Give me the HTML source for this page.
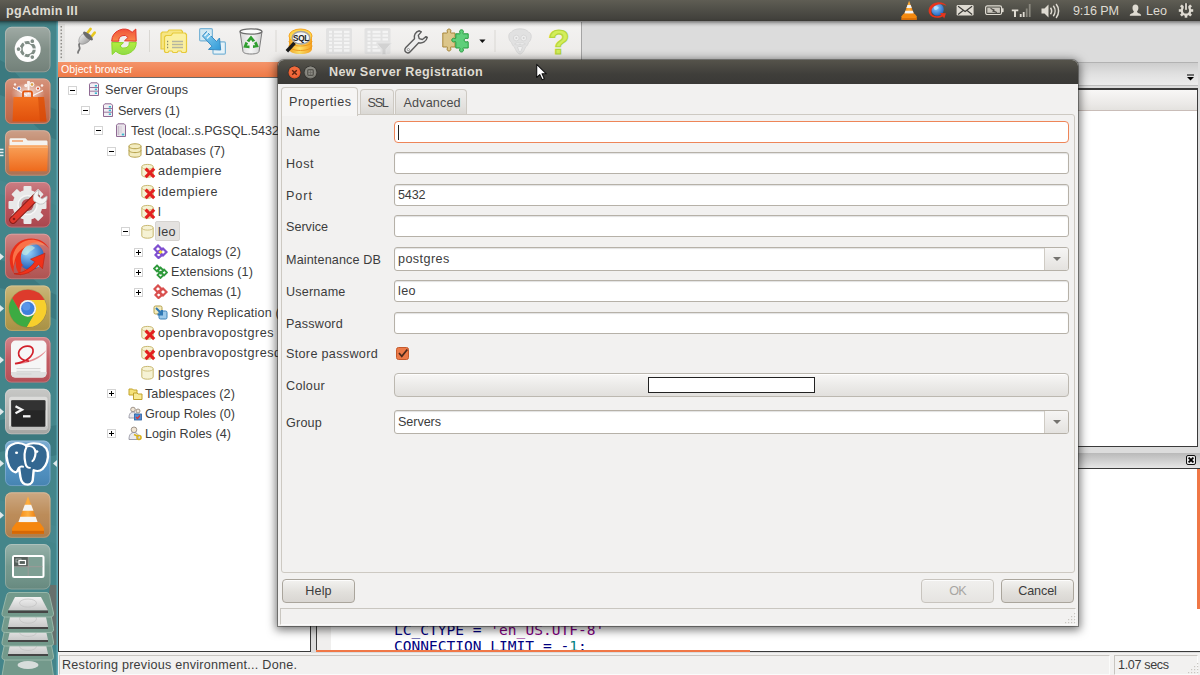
<!DOCTYPE html>
<html lang="en">
<head>
<meta charset="utf-8">
<title>pgAdmin III</title>
<style>
*{box-sizing:border-box;margin:0;padding:0}
html,body{width:1200px;height:675px;overflow:hidden;background:#f2f1f0}
body{position:relative;font-family:"Liberation Sans",sans-serif;font-size:12.6px;color:#3c3c3c}
.a{position:absolute}
.t{position:absolute;white-space:nowrap;line-height:16px}
/* top panel */
#panel{left:0;top:0;width:1200px;height:21px;background:linear-gradient(#5f5d54 0,#504f48 45%,#42413c 90%,#3a3935 100%)}
#panel .t{color:#dfdbd2;top:2.5px}
/* launcher */
#launcher{left:0;top:22px;width:58px;height:653px;background:#3f7b83;overflow:hidden}
.tile{position:absolute;left:5px;width:46px;height:46px;border-radius:7px;box-shadow:inset 0 0 0 1px rgba(255,255,255,.18),0 0 0 1px rgba(0,0,0,.12)}
/* main window */
#toolbar{left:58px;top:21px;width:523px;height:41px;background:linear-gradient(#f4f3f2,#eceae8)}
#tbgray{left:581px;top:22px;width:619px;border-left:1.5px solid #a4a4a4;height:40px;background:#dcdcdc}
.sep{position:absolute;top:29px;width:1px;height:24px;background:#d6d4d0}
#obhead{left:58px;top:62px;width:253px;height:15px;background:linear-gradient(#f4946a,#ef7a47)}
#tree{left:58px;top:77px;width:253px;height:575px;background:#fff;border:1px solid #3a3a3a;border-top-color:#6a6a6a}
.row{position:absolute;white-space:nowrap;line-height:20px;height:20px;color:#3c3c3c}
.exp{position:absolute;width:9px;height:9px;border:1px solid #d4d4d4;background:#fff}
.exp:before{content:"";position:absolute;left:1px;top:3px;width:5px;height:1px;background:#000}
.exp.p:after{content:"";position:absolute;left:3px;top:1px;width:1px;height:5px;background:#000}
/* dialog */
#dlg{left:278px;top:60px;width:800px;height:566px;background:#f2f1f0;border-radius:6px 6px 0 0;box-shadow:0 2px 10px 2px rgba(0,0,0,.55),0 0 0 1px rgba(60,59,55,.45)}
#dtitle{left:0;top:0;width:800px;height:24px;border-radius:6px 6px 0 0;background:linear-gradient(#55534b,#3f3e3a 60%,#3a3936)}
.inp{position:absolute;left:116px;width:675px;height:22px;background:#fff;border:1px solid #b6b1a8;border-radius:3px;box-shadow:inset 0 1px 1px rgba(0,0,0,.12);padding:0 3px;line-height:20px;color:#3c3c3c}
.lbl{position:absolute;left:8px;white-space:nowrap;line-height:16px;color:#3c3c3c}
.btn{position:absolute;height:24px;border:1px solid #aaa59c;border-radius:4px;background:linear-gradient(#f3f2f0,#e2e0dc 55%,#d9d6d2);text-align:center;line-height:22px;color:#3c3c3c;box-shadow:inset 0 1px 0 rgba(255,255,255,.8)}

/* right pane */
#rtabs{left:311px;top:62px;width:887px;height:24px;border-top:1px solid #b2b2b2;border-bottom:1px solid #bdbdbd;background:linear-gradient(#cdcdcd,#e0e0e0 50%,#ececec)}
#rgap{left:311px;top:86px;width:889px;height:2px;background:#dcdcdc}
#rlist{left:316px;top:88px;width:882px;height:359px;background:#fff;border:1px solid #3a3a3a;border-top:2px solid #3a3a3a}
#rlhead{left:0;top:0;width:880px;height:21px;background:linear-gradient(#f8f7f6,#ebe9e7 70%,#e4e2df);border-bottom:1px solid #c9bdb8}
#sqlhead{left:316px;top:453px;width:884px;height:15px;background:linear-gradient(#b9b9b9,#cfcfcf 50%,#e6e6e6)}
#sql{left:316px;top:468px;width:884px;height:184px;background:#fff;border:1px solid #3a3a3a;border-right:0;overflow:hidden}
#sqlm{left:0;top:0;width:14px;height:184px;background:#f0efee}
.code{position:absolute;white-space:pre;font-family:"DejaVu Sans Mono","Liberation Mono",monospace;font-size:14.55px;line-height:17px;color:#00007f}
#status{left:58px;top:653px;width:1142px;height:22px;background:#f2f1f0}
.sf{position:absolute;top:2px;height:20px;border:1px solid #c8c5c0;border-bottom-color:#fbfbfa;border-right-color:#fbfbfa;}

.tab{position:absolute;top:29px;height:26px;height:25px;border:1px solid #cdc9c2;border-bottom:0;border-radius:4px 4px 0 0;background:linear-gradient(#efeeec,#e3e1de 70%,#dad8d4);color:#4a4a4a}
.tab.on{top:27px;height:29px;background:#f6f5f4;color:#3c3c3c;z-index:2}
#nb{left:3px;top:54px;width:794px;height:459px;border:1px solid #cdc9c2;border-radius:0 3px 3px 3px;background:#f2f1f0}
.combo{position:absolute;left:116px;width:675px;height:24px;background:#fff;border:1px solid #b6b1a8;border-radius:3px;box-shadow:inset 0 1px 1px rgba(0,0,0,.12);padding:0 3px;line-height:22px;color:#3c3c3c}
.combo i{position:absolute;right:0;top:0;width:24px;height:22px;border-left:1px solid #cfcbc4;border-radius:0 2px 2px 0;background:linear-gradient(#f6f5f4,#e4e2df)}
.combo i:after{content:"";position:absolute;left:7.5px;top:9px;border:4px solid transparent;border-top:4.5px solid #75736f;border-bottom:0}
</style>
</head>
<body>
<!-- ===== top panel ===== -->
<div id="panel" class="a">
  <span class="t" style="left:6px;font-weight:bold"><span style="letter-spacing:0.31px">pgAdmin III</span></span>
  <!--PI-->
<svg class="a" style="left:890px;top:0" width="310" height="22" viewBox="890 0 310 22">
<defs>
<linearGradient id="gCone" x1="0" y1="0" x2="1" y2="0"><stop offset="0" stop-color="#f28a12"/><stop offset=".5" stop-color="#ffae3a"/><stop offset="1" stop-color="#e87208"/></linearGradient>
<radialGradient id="gGlobe" cx=".4" cy=".35" r=".7"><stop offset="0" stop-color="#8fd0ff"/><stop offset="1" stop-color="#1f5fc0"/></radialGradient>
</defs>
<!-- vlc cone -->
<g transform="translate(900.500 .7)">
<path d="M8.600 0L3.200 14.500h10.800z" fill="url(#gCone)"/>
<path d="M7 4.300h3.200l1.100 3H5.900zM4.900 10h7.400l1 2.800H3.900z" fill="#f2f2f2"/>
<path d="M1 15.500l2-2.500h11.200l2 2.500v3.600H1z" fill="#f58a10"/>
<path d="M1 17.500h15.200v1.600H1z" fill="#d96c06"/>
</g>
<!-- swiftfox -->
<g transform="translate(928 2)">
<circle cx="9.500" cy="7.500" r="6.300" fill="url(#gGlobe)"/>
<path d="M6 4.500c2-1 4 0 5 1.500-1 .5-2 2-3.500 2S5.500 6 6 4.500z" fill="#bfe6ff" opacity=".8"/>
<path d="M1 11C-.5 6 3 1.500 9 .5c4-.6 8 .8 9.500 3.500-3-2-7-2.200-10.500-.7C4.500 5 2.500 8 3.500 11.500c1.500 3 6 3.600 10 1.500l-1.500-2 6 .2-1.800 5.300-1.300-2C10 17 3 16 1 11z" fill="#e8341c"/>
</g>
<!-- mail -->
<g transform="translate(956.600 5)">
<rect x="0" y="0" width="17" height="10.600" rx="1.300" fill="#dfdbd2"/>
<path d="M1.500 1.300l7 5.200 7-5.200M1.500 9.500l5-4M15.500 9.500l-5-4" fill="none" stroke="#3c3b37" stroke-width="1.100"/>
</g>
<!-- battery -->
<g transform="translate(985 5.300)">
<rect x=".6" y=".6" width="16" height="8.600" rx="1.800" fill="none" stroke="#dfdbd2" stroke-width="1.200"/>
<rect x="17" y="3" width="1.600" height="3.800" fill="#dfdbd2"/>
<rect x="2.300" y="2.300" width="12.600" height="5.200" fill="#c9c5bc"/>
<path d="M5.500 3l4 1.700-1 .8 3.500 1.700-4.500-1.300 1-.9z" fill="#3c3b37" stroke="#3c3b37" stroke-width=".6"/>
</g>
<!-- network -->
<g transform="translate(1011.800 0)">
<path d="M0 9.500h6.500v1.800h-2.300v5.700h-2v-5.700H0z" fill="#dfdbd2"/>
<rect x="8" y="14" width="1.800" height="3" fill="#dfdbd2"/>
<rect x="11" y="12" width="1.800" height="5" fill="#dfdbd2"/>
<rect x="14" y="8.500" width="1.800" height="8.500" fill="#8a887f"/>
<rect x="17" y="4" width="1.800" height="13" fill="#8a887f"/>
</g>
<!-- volume -->
<g transform="translate(1041.500 3.500)">
<path d="M0 5h3l4-4v13l-4-4H0z" fill="#dfdbd2"/>
<path d="M9 4.300c1.300 1.800 1.300 4.600 0 6.400M11.800 2.300c2.300 3 2.300 7.400 0 10.400M14.600.5c3.300 4 3.300 10 0 14" fill="none" stroke="#dfdbd2" stroke-width="1.500"/>
</g>
<!-- user -->
<g transform="translate(1129.800 4.400)">
<path d="M5.600 0c2 0 3 1.500 3 3.500 0 1.500-.6 2.800-1.400 3.500.3 1.200 1 1.600 2.500 2.200 1.300.5 1.600 1.200 1.600 2.200H0c0-1 .3-1.700 1.600-2.200 1.500-.6 2.200-1 2.500-2.200-.8-.7-1.400-2-1.400-3.500 0-2 1-3.500 2.900-3.500z" fill="#dfdbd2"/>
</g>
<!-- power gear -->
<g transform="translate(1186 10.500)">
<g fill="#dfdbd2"><rect x="-1.300" y="-7.200" width="2.600" height="3" transform="rotate(45)"/><rect x="-1.300" y="-7.200" width="2.600" height="3" transform="rotate(90)"/><rect x="-1.300" y="-7.200" width="2.600" height="3" transform="rotate(135)"/><rect x="-1.300" y="-7.200" width="2.600" height="3" transform="rotate(180)"/><rect x="-1.300" y="-7.200" width="2.600" height="3" transform="rotate(225)"/><rect x="-1.300" y="-7.200" width="2.600" height="3" transform="rotate(270)"/><rect x="-1.300" y="-7.200" width="2.600" height="3" transform="rotate(315)"/></g>
<circle r="4.200" fill="none" stroke="#dfdbd2" stroke-width="2.200"/>
<rect x="-2.300" y="-7.500" width="4.600" height="5.500" fill="#45443f"/>
<rect x="-.9" y="-7.300" width="1.800" height="6.600" fill="#dfdbd2"/>
</g>
</svg>

<!--/PI-->
  <span class="t" style="left:1073px"><span style="letter-spacing:-0.17px">9:16 PM</span></span>
  <span class="t" style="left:1146px"><span style="letter-spacing:-0.01px">Leo</span></span>
</div>
<!-- ===== launcher ===== -->
<div id="launcher" class="a" style="top:0;height:675px;background:none"><!--LA-->
<svg class="a" style="left:0;top:21px" width="58" height="654" viewBox="0 21 58 654">
<defs>
<linearGradient id="lgT" x1="0" y1="0" x2="0" y2="1"><stop offset="0" stop-color="#fff" stop-opacity=".28"/><stop offset=".5" stop-color="#fff" stop-opacity=".04"/><stop offset="1" stop-color="#000" stop-opacity=".08"/></linearGradient>
<linearGradient id="lgBag" x1="0" y1="0" x2="0" y2="1"><stop offset="0" stop-color="#f2701f"/><stop offset="1" stop-color="#e0500c"/></linearGradient>
<linearGradient id="lgFol" x1="0" y1="0" x2="0" y2="1"><stop offset="0" stop-color="#f9a25a"/><stop offset="1" stop-color="#ee6a1c"/></linearGradient>
<radialGradient id="lgGlobe" cx=".4" cy=".35" r=".7"><stop offset="0" stop-color="#9ad8ff"/><stop offset="1" stop-color="#1a52b0"/></radialGradient>
<linearGradient id="lgCone" x1="0" y1="0" x2="1" y2="0"><stop offset="0" stop-color="#f08210"/><stop offset=".5" stop-color="#ffb040"/><stop offset="1" stop-color="#e46e06"/></linearGradient>
<linearGradient id="lgHd" x1="0" y1="0" x2="0" y2="1"><stop offset="0" stop-color="#f2f2f2"/><stop offset="1" stop-color="#c9c9c9"/></linearGradient>
<radialGradient id="lgGlow" cx=".5" cy=".5" r=".5"><stop offset="0" stop-color="#fff" stop-opacity=".85"/><stop offset="1" stop-color="#fff" stop-opacity="0"/></radialGradient>
</defs>
<rect x="0" y="21" width="58" height="654" fill="#44858a"/>
<path d="M0 60c20 10 30 40 57 50v30C30 130 20 100 0 95zM0 260c25 5 40 30 57 35v25C35 310 15 290 0 288zM0 420c20-5 40 10 57 5v30c-20 5-40-8-57-3z" fill="#37737b" opacity=".7"/>
<path d="M0 180c18 8 38 2 57 12v14C38 196 18 202 0 194zM0 500c22 6 36 22 57 26v18c-21-4-35-20-57-26z" fill="#4a8a90" opacity=".5"/>
<path d="M50 585h7v60h-7c-3-20-3-40 0-60z" fill="#9a5040" opacity=".4"/>
<rect x="56.500" y="21" width="1.500" height="654" fill="#5fa9b6"/>
<rect x="5" y="26.8" width="45.500" height="45.500" rx="6.500" fill="#7b8a82"/><rect x="5" y="26.8" width="45.500" height="45.500" rx="6.500" fill="url(#lgT)"/><rect x="5.500" y="27.3" width="44.500" height="44.500" rx="6" fill="none" stroke="#fff" stroke-opacity=".22"/>
<rect x="5" y="78.5" width="45.500" height="45.500" rx="6.500" fill="#c66c4c"/><rect x="5" y="78.5" width="45.500" height="45.500" rx="6.500" fill="url(#lgT)"/><rect x="5.500" y="79.0" width="44.500" height="44.500" rx="6" fill="none" stroke="#fff" stroke-opacity=".22"/>
<rect x="5" y="130.2" width="45.500" height="45.500" rx="6.500" fill="#b97a5a"/><rect x="5" y="130.2" width="45.500" height="45.500" rx="6.500" fill="url(#lgT)"/><rect x="5.500" y="130.7" width="44.500" height="44.500" rx="6" fill="none" stroke="#fff" stroke-opacity=".22"/>
<rect x="5" y="182.0" width="45.500" height="45.500" rx="6.500" fill="#b64c54"/><rect x="5" y="182.0" width="45.500" height="45.500" rx="6.500" fill="url(#lgT)"/><rect x="5.500" y="182.5" width="44.500" height="44.500" rx="6" fill="none" stroke="#fff" stroke-opacity=".22"/>
<rect x="5" y="233.7" width="45.500" height="45.500" rx="6.500" fill="#bb5a58"/><rect x="5" y="233.7" width="45.500" height="45.500" rx="6.500" fill="url(#lgT)"/><rect x="5.500" y="234.2" width="44.500" height="44.500" rx="6" fill="none" stroke="#fff" stroke-opacity=".22"/>
<rect x="5" y="285.4" width="45.500" height="45.500" rx="6.500" fill="#b59c4a"/><rect x="5" y="285.4" width="45.500" height="45.500" rx="6.500" fill="url(#lgT)"/><rect x="5.500" y="285.9" width="44.500" height="44.500" rx="6" fill="none" stroke="#fff" stroke-opacity=".22"/>
<rect x="5" y="337.1" width="45.500" height="45.500" rx="6.500" fill="#c0545c"/><rect x="5" y="337.1" width="45.500" height="45.500" rx="6.500" fill="url(#lgT)"/><rect x="5.500" y="337.6" width="44.500" height="44.500" rx="6" fill="none" stroke="#fff" stroke-opacity=".22"/>
<rect x="5" y="388.8" width="45.500" height="45.500" rx="6.500" fill="#b2b3b0"/><rect x="5" y="388.8" width="45.500" height="45.500" rx="6.500" fill="url(#lgT)"/><rect x="5.500" y="389.3" width="44.500" height="44.500" rx="6" fill="none" stroke="#fff" stroke-opacity=".22"/>
<rect x="5" y="440.6" width="45.500" height="45.500" rx="6.500" fill="#4b8ec0"/><rect x="5" y="440.6" width="45.500" height="45.500" rx="6.500" fill="url(#lgT)"/><rect x="5.500" y="441.1" width="44.500" height="44.500" rx="6" fill="none" stroke="#fff" stroke-opacity=".22"/>
<rect x="5" y="492.3" width="45.500" height="45.500" rx="6.500" fill="#b98752"/><rect x="5" y="492.3" width="45.500" height="45.500" rx="6.500" fill="url(#lgT)"/><rect x="5.500" y="492.8" width="44.500" height="44.500" rx="6" fill="none" stroke="#fff" stroke-opacity=".22"/>
<rect x="5" y="544.0" width="45.500" height="45.500" rx="6.500" fill="#6f9489"/><rect x="5" y="544.0" width="45.500" height="45.500" rx="6.500" fill="url(#lgT)"/><rect x="5.500" y="544.5" width="44.500" height="44.500" rx="6" fill="none" stroke="#fff" stroke-opacity=".22"/>
<g transform="translate(27.700 49.1)"><circle r="13" fill="#fdfdfd"/><circle r="6.600" fill="none" stroke="#7f8c85" stroke-width="3.100"/><g stroke="#fdfdfd" stroke-width="1.300"><path d="M3 0h7" transform="rotate(0)"/><path d="M3 0h7" transform="rotate(120)"/><path d="M3 0h7" transform="rotate(240)"/></g><g fill="#7f8c85" stroke="#fdfdfd" stroke-width="1.100"><circle cx="-9.200" cy="0" r="2.400"/><circle cx="4.600" cy="-7.970" r="2.400"/><circle cx="4.600" cy="7.970" r="2.400"/></g></g>
<g transform="translate(5 78.5)"><ellipse cx="23" cy="15" rx="17" ry="11" fill="url(#lgGlow)"/><g fill="#fff" opacity=".85"><circle cx="14" cy="10" r="2.200"/><circle cx="21" cy="7" r="1.800"/><circle cx="27" cy="6" r="2.400"/><circle cx="33" cy="10" r="2.200"/><circle cx="37" cy="7" r="1.300"/><circle cx="10" cy="6" r="1.200"/><path d="M22.500 3l1 12 1-12zM8 9l14 8zM38 12l-12 6z" stroke="#fff" stroke-width="1"/></g><circle cx="14" cy="10" r="1.200" fill="#3a6ad0"/><circle cx="27" cy="6" r="1.300" fill="#d8a040"/><circle cx="33" cy="10" r="1.100" fill="#e05030"/><path d="M18 19v-4.500c0-1 .6-1.600 1.600-1.600h5.800c1 0 1.600.6 1.600 1.600V19" fill="none" stroke="#e2560f" stroke-width="1.800"/><path d="M8.500 18.500h30.500l2.500 24.500H7.500z" fill="url(#lgBag)"/><path d="M33 18.500h6l2.500 24.500H35z" fill="#d2480a" opacity=".6"/></g>
<g transform="translate(5 130.2)"><path d="M4.500 9.500c0-1 .5-1.500 1.500-1.500h14.500l2.200 2.200H41c1 0 1.500.5 1.500 1.500v6h-38z" fill="#f4f2ee"/><path d="M7 10.800h11" stroke="#f08a48" stroke-width="1.200"/><path d="M3.500 16.500c0-1 .5-1.500 1.500-1.500h36.500c1 0 1.500.5 1.500 1.500l-.8 23c0 1-.5 1.500-1.500 1.500H5.800c-1 0-1.500-.5-1.500-1.500z" fill="url(#lgFol)"/><path d="M4 17h38.500" stroke="#fbc08a" stroke-width="1"/></g>
<g fill="#e8ecec"><rect x="0" y="148.7" width="3.500" height="1.500"/><rect x="0" y="151.7" width="3.500" height="1.500"/><rect x="0" y="154.7" width="3.500" height="1.500"/></g>
<g transform="translate(27.500 205.0)"><g fill="#e9e9e9"><rect x="-4" y="-19" width="8" height="9" rx="1" transform="rotate(0)"/><rect x="-4" y="-19" width="8" height="9" rx="1" transform="rotate(45)"/><rect x="-4" y="-19" width="8" height="9" rx="1" transform="rotate(90)"/><rect x="-4" y="-19" width="8" height="9" rx="1" transform="rotate(135)"/><rect x="-4" y="-19" width="8" height="9" rx="1" transform="rotate(180)"/><rect x="-4" y="-19" width="8" height="9" rx="1" transform="rotate(225)"/><rect x="-4" y="-19" width="8" height="9" rx="1" transform="rotate(270)"/><rect x="-4" y="-19" width="8" height="9" rx="1" transform="rotate(315)"/><circle r="15"/></g><circle r="9.500" fill="#cfcfcf"/><circle r="6" fill="#b54a52"/><circle r="9.500" fill="none" stroke="#f6f6f6" stroke-width="1.500"/></g>
<g transform="translate(5 182.0)"><path d="M8 38L31 15" stroke="#8a1c16" stroke-width="7.500" stroke-linecap="round"/><path d="M8 38L30 16" stroke="#e0382c" stroke-width="5.500" stroke-linecap="round"/><path d="M29 19c-2-4 0-9 5-11l-1 6 4 3 5-3c1 5-3 9-8 8z" fill="#f4f4f4" stroke="#bdbdbd" stroke-width=".8"/><circle cx="9" cy="37" r="1.300" fill="#8a1c16"/></g>
<g transform="translate(5 233.7)"><circle cx="25.500" cy="22.500" r="13.500" fill="url(#lgGlobe)"/><path d="M18 13c4-3 9-2 12 1-1 2-5 3-7 6s-6 1-7-2 0-4 2-5zM30 27c3-1 6 0 7 2-1 3-4 5-7 5-1-2-1-5 0-7z" fill="#cdeedd" opacity=".6"/><path d="M44 15C40 5 24 1 13 9 4 16 2 29 9 40c-1-5 0-9 2-13-1 6 1 11 5 15-1-5 0-9 2-12 0 5 3 9 8 11-7-4-11-11-10-19 1-9 10-15 20-13 3 .7 6 3 8 6z" fill="#ea2f18"/><path d="M40 12C36 6 24 3 15 10 8 16 6 25 9 33c0-8 3-15 10-19 7-4 15-4 21-2z" fill="#ff8a5a" opacity=".75"/><path d="M9 40c8 0 16-5 21-12l-4.500-2.500 14.500-6-2.500 15.500-4-4C28 38 18 43 9 40z" fill="#f0321a" stroke="#c01c0c" stroke-width=".6"/></g>
<path d="M0 253.2l4 3.500-4 3.500z" fill="#dfe9ea"/>
<g transform="translate(27.800 308.4)"><circle r="19.300" fill="#000" opacity=".12"/><path d="M0.00 -8.40L16.71 -8.40A18.7 18.7 0 0 0 -15.63 -10.27L-7.27 4.20A8.4 8.4 0 0 1 0.00 -8.40z" fill="#dd3b2c"/><path d="M7.27 4.20L-1.08 18.67A18.7 18.7 0 0 0 16.71 -8.40L0.00 -8.40A8.4 8.4 0 0 1 7.27 4.20z" fill="#f7cf2c"/><path d="M-7.27 4.20L-15.63 -10.27A18.7 18.7 0 0 0 -1.08 18.67L7.27 4.20A8.4 8.4 0 0 1 -7.27 4.20z" fill="#3cab42"/><circle r="8.400" fill="#f2f2f2"/><circle r="6.700" fill="#3f7fdc"/><circle cx="-1.500" cy="-2" r="4" fill="#6aa4ee" opacity=".6"/></g>
<path d="M0 304.9l4 3.500-4 3.500z" fill="#dfe9ea"/>
<g transform="translate(5 337.1)"><rect x="6" y="3.500" width="35.500" height="37" rx="4.500" fill="#f6f6f6"/><path d="M6 35h35.500v1c0 3-1.500 4.500-4.500 4.500H10.500C7.500 40.500 6 39 6 36z" fill="#dedede"/><path d="M8.500 27c10-1 26-6 33-14-5 9-20 15-33 14z" fill="#e06a70" opacity=".75"/><path d="M10 26.500c11-1 19-8 18-14-.8-4.500-9-5-13 0-4 5.500 1 11 9 11.500" fill="none" stroke="#d21f2a" stroke-width="1.700"/><path d="M11.500 31.500h24M11.500 34.200h24M11.500 36.900h15" stroke="#d2d2d2" stroke-width="1"/></g>
<path d="M0 356.6l4 3.500-4 3.500z" fill="#dfe9ea"/>
<g transform="translate(5 388.8)"><rect x="4" y="8" width="38.500" height="33" rx="2.500" fill="#dcdcda"/><rect x="4" y="37" width="38.500" height="4" rx="2" fill="#c2c2c0"/><rect x="6.200" y="11.500" width="34.200" height="26.500" rx="1.200" fill="#262626"/><rect x="6.200" y="11.500" width="34.200" height="10" fill="#3a3a3a" opacity=".6"/><path d="M10.500 17.500l6.500 3.500-6.500 3.500" fill="none" stroke="#f4f4f4" stroke-width="2.300"/><path d="M18 27.500h7.500" stroke="#f4f4f4" stroke-width="2.300"/></g>
<path d="M0 408.3l4 3.500-4 3.500z" fill="#dfe9ea"/>
<g transform="translate(5 440.6) translate(-7.500 -3) scale(1.270 1.120)"><path d="M12 6c-5 2-6 9-4 16 1 4 3 8 6 9 2 0 2-3 3-4l1 8c.5 4 2.500 7 6 7s4-3 4-7l.5-6c2 1 5 1 7-1 3-3 5-9 4-15-1-5-5-8-11-8-3 0-5 1-6 2-3-2-7-3-10.500-1z" fill="#336791" stroke="#fff" stroke-width="1.900" stroke-linejoin="round"/><path d="M23 8c-2 4-2 10-1 15 .5 3 2 4 3.500 4M22.500 8c3-1 6 0 7 3s0 8-2 10M17 27c.5-1 2-1.500 3-1" fill="none" stroke="#fff" stroke-width="1.700" stroke-linecap="round"/><circle cx="15" cy="13.500" r="1.200" fill="#fff"/><circle cx="31" cy="12.500" r="1.200" fill="#fff"/></g>
<path d="M0 460.1l4 3.500-4 3.500z" fill="#dfe9ea"/><path d="M57 460.1l-4 3.500 4 3.500z" fill="#dfe9ea"/>
<g transform="translate(5 492.3)"><path d="M23 4L12.500 32h21z" fill="url(#lgCone)"/><path d="M19.800 12.500h6.400l2.300 6h-11zM15.300 24.500h15.400l2 5.500H13.300z" fill="#f4f4f4"/><path d="M7 36l4.500-6h23l4.500 6v5.500H7z" fill="#f5860e"/><path d="M7 38.500h32v3H7z" fill="#d66806"/></g>
<path d="M0 511.8l4 3.500-4 3.500z" fill="#dfe9ea"/>
<g transform="translate(5 544.0)"><rect x="8" y="12" width="30.500" height="21" rx="1.500" fill="#7e9f94" stroke="#fff" stroke-width="2"/><rect x="9" y="13" width="14" height="9.500" fill="#555f5b"/><path d="M23.200 13v19M9 22.700h28.500" stroke="#a89a9a" stroke-width=".7"/><rect x="11" y="15" width="5" height="3" fill="none" stroke="#b5bdb9" stroke-width=".8"/><rect x="14" y="16.500" width="6.500" height="4" fill="#555f5b" stroke="#fff" stroke-width="1.200"/></g>
<path d="M10 646h36c2 0 3 1 3.500 3L53.500 676c.4 2.500-.8 4-3.500 4H5.500c-2.700 0-3.900-1.500-3.500-4L6.500 649c.5-2 1.500-3 3.500-3z" fill="#73998b" stroke="#9dbbad" stroke-width=".9"/><ellipse cx="28" cy="665.0" rx="10.500" ry="4.0" fill="#e9e9e9" opacity=".85"/>
<path d="M10 632h36c2 0 3 1 3.500 3L53.500 656c.4 2.500-.8 4-3.500 4H5.500c-2.700 0-3.900-1.500-3.500-4L6.500 635c.5-2 1.500-3 3.500-3z" fill="#73998b" stroke="#9dbbad" stroke-width=".9"/><path d="M11 640h34l3 14H8z" fill="url(#lgHd)"/><path d="M8 654h40v2H8z" fill="#454545"/><ellipse cx="28" cy="646.3" rx="8.500" ry="4.2" fill="none" stroke="#c4c4c4" stroke-width=".8"/>
<path d="M10 618h36c2 0 3 1 3.500 3L53.500 642c.4 2.500-.8 4-3.500 4H5.500c-2.700 0-3.900-1.500-3.500-4L6.500 621c.5-2 1.500-3 3.500-3z" fill="#73998b" stroke="#9dbbad" stroke-width=".9"/><path d="M11 626h34l3 14H8z" fill="url(#lgHd)"/><path d="M8 640h40v2H8z" fill="#454545"/><ellipse cx="28" cy="632.3" rx="8.500" ry="4.2" fill="none" stroke="#c4c4c4" stroke-width=".8"/>
<path d="M10 604h36c2 0 3 1 3.500 3L53.500 628.5c.4 2.500-.8 4-3.500 4H5.500c-2.700 0-3.900-1.500-3.500-4L6.500 607c.5-2 1.500-3 3.500-3z" fill="#73998b" stroke="#9dbbad" stroke-width=".9"/><path d="M11 612h34l3 15H8z" fill="url(#lgHd)"/><path d="M8 627h40v2H8z" fill="#454545"/><ellipse cx="28" cy="618.75" rx="8.500" ry="4.5" fill="none" stroke="#c4c4c4" stroke-width=".8"/>
<path d="M10 592.5h36c2 0 3 1 3.500 3L53.500 613c.4 2.500-.8 4-3.500 4H5.500c-2.700 0-3.900-1.500-3.500-4L6.500 595.5c.5-2 1.500-3 3.500-3z" fill="#73998b" stroke="#9dbbad" stroke-width=".9"/><path d="M15 597h26l7 13.5H8z" fill="url(#lgHd)"/><path d="M8 610.5h40v2.5H8z" fill="#454545"/><ellipse cx="28" cy="603.075" rx="8.500" ry="4.05" fill="none" stroke="#c4c4c4" stroke-width=".8"/>
</svg>
<!--/LA--></div>
<!-- ===== main window ===== -->
<div id="toolbar" class="a"></div>
<!--TB-->
<svg class="a" style="left:58px;top:22px" width="522" height="40" viewBox="58 22 522 40">
<defs>
<linearGradient id="gRed" x1="0" y1="0" x2="0" y2="1"><stop offset="0" stop-color="#f0523a"/><stop offset="1" stop-color="#f98a4a"/></linearGradient>
<linearGradient id="gGrn" x1="0" y1="0" x2="0" y2="1"><stop offset="0" stop-color="#b4ec3c"/><stop offset="1" stop-color="#8fdc4a"/></linearGradient>
<linearGradient id="gBlu" x1="0" y1="0" x2="1" y2="1"><stop offset="0" stop-color="#8fd0f0"/><stop offset="1" stop-color="#2f9ad8"/></linearGradient>
<linearGradient id="gBin" x1="0" y1="0" x2="1" y2="0"><stop offset="0" stop-color="#d8d8d8"/><stop offset=".5" stop-color="#f6f6f6"/><stop offset="1" stop-color="#d0d0d0"/></linearGradient>
<linearGradient id="gGold" x1="0" y1="0" x2="1" y2="0"><stop offset="0" stop-color="#f5a623"/><stop offset=".45" stop-color="#ffe36a"/><stop offset="1" stop-color="#f5a020"/></linearGradient>
<linearGradient id="gPlug" x1="0" y1="0" x2="1" y2="1"><stop offset="0" stop-color="#fafafa"/><stop offset="1" stop-color="#8c8c8c"/></linearGradient>
</defs>
<!-- handle -->
<rect x="58" y="24" width="7" height="37" fill="#e6e5e3"/>
<g fill="#8e8c88"><rect x="60.500" y="26" width="1.500" height="1.500"/><rect x="60.500" y="29.400" width="1.500" height="1.500"/><rect x="60.500" y="32.800" width="1.500" height="1.500"/><rect x="60.500" y="36.200" width="1.500" height="1.500"/><rect x="60.500" y="39.600" width="1.500" height="1.500"/><rect x="60.500" y="43" width="1.500" height="1.500"/><rect x="60.500" y="46.400" width="1.500" height="1.500"/><rect x="60.500" y="49.800" width="1.500" height="1.500"/><rect x="60.500" y="53.200" width="1.500" height="1.500"/><rect x="60.500" y="56.600" width="1.500" height="1.500"/></g>
<!-- plug -->
<g transform="translate(76 28)">
<path d="M3.600 15.500c-2 2 .800 3.500 0 5.500s-1.800 2.500-1.600 3.800" fill="none" stroke="#777" stroke-width="1.800" stroke-linecap="round"/>
<path d="M11.200 5.200L14.600.9M15.200 9l3.500-4.400" stroke="#e8c820" stroke-width="2.600" stroke-linecap="round"/>
<path d="M8 5.500c-3 1-5.500 4.500-5.200 8.500 1 2 3 2.500 4.500 2.200 4-1.200 6.500-3.200 7.500-5.500z" fill="url(#gPlug)" stroke="#8a8a8a" stroke-width=".6"/>
<ellipse cx="12" cy="8" rx="6.200" ry="2.300" transform="rotate(41 12 8)" fill="#6a6a6a"/>
</g>
<!-- refresh -->
<g transform="translate(111 28)" stroke-linejoin="round">
<path d="M.7 13.200A12.300 12.300 0 0 1 21.200 4.300L24.800 1l.4 12.200-11.700-.4 3.600-3.400A5.200 5.200 0 0 0 7.800 13.200z" fill="url(#gRed)" stroke="#e3352a" stroke-width="1"/>
<path d="M25.300 14.300A12.300 12.300 0 0 1 4.800 23.200L1.200 26.500l-.4-12.200 11.700 .4-3.600 3.400A5.200 5.200 0 0 0 18.200 14.300z" fill="url(#gGrn)" stroke="#8ad62c" stroke-width="1"/>
</g>
<rect x="149" y="30" width="1" height="22" fill="#d9d7d3"/>
<!-- folders -->
<g transform="translate(160 29)" stroke="#e6c93a" stroke-width="1.200" stroke-linejoin="round">
<path d="M1 4.500L2.500 3h5L9 1h12l1.500 1.500v17.500H1z" fill="#f6e583"/>
<path d="M4.500 8L6 6.500h5l2-2.500h12l1.500 1.500v17l-1 1h-3.500l-1-1.500h-3l-1 1.500h-4l-1-1.500h-3l-1 1.500H5.500l-1-1z" fill="#fbf0a0"/>
<path d="M7 12.500h1.200M7 15.500h1.200M7 18.500h1.200" stroke="#8a8a6a" stroke-width="1.400"/>
<path d="M12 12.500h11M12 15.500h11M12 18.500h11" stroke="#b5b5a0" stroke-width="1.600"/>
</g>
<!-- blue arrows -->
<g transform="translate(199 28)">
<rect x=".6" y=".6" width="12.800" height="12.300" rx="1.200" fill="#d2e8f2" stroke="#7ab4d6" stroke-width="1.200"/>
<rect x="14" y="13.800" width="12.400" height="12.300" rx="1.200" fill="#e6f2f8" stroke="#7ab4d6" stroke-width="1.200"/>
<path d="M7.500 3.500l10 10 3-3.500 1.200 12-12.200-.6 3.500-3.200-9.500-10.200z" fill="url(#gBlu)" stroke="#3a8cc4" stroke-width="1" stroke-linejoin="round"/>
<path d="M5.500 8l4-4M8 10.500l4-4" stroke="#e8f6fc" stroke-width="1.300"/>
</g>
<!-- trash -->
<g transform="translate(239 28)">
<path d="M1 3.500l3 20c.3 1.600 3.500 2.500 8 2.500s7.700-.9 8-2.500l3-20z" fill="url(#gBin)" stroke="#7c7c7c" stroke-width="1"/>
<ellipse cx="12" cy="3.500" rx="11" ry="2.600" fill="#fafafa" stroke="#6e6e6e" stroke-width="1.200"/>
<g fill="#2f9e2f"><path d="M12 7.500l4.200 5.200-2.600 1.300-1.600-2.300-1.800 2.500-2.500-1.500z"/><path d="M17.500 13.500l2.300 5.500-5.800 1v-2.800h2.300l-1.300-2.300z"/><path d="M6.500 13.800l2.600 1.400-1.300 2.200h2.700v2.800l-6.200-.8z"/></g>
</g>
<rect x="275.500" y="30" width="1" height="22" fill="#d9d7d3"/>
<!-- sql -->
<g transform="translate(286 28)">
<path d="M3 8v13c0 3 5 5 11.500 5s11.500-2 11.500-5V8z" fill="url(#gGold)"/>
<path d="M3 13c0 3 5 5 11.500 5s11.500-2 11.500-5M3 17.500c0 3 5 5 11.500 5s11.500-2 11.500-5" fill="none" stroke="#ee9a1c" stroke-width="1"/>
<ellipse cx="14.500" cy="8" rx="11.500" ry="7" fill="#ffd54a" stroke="#f5a623" stroke-width="1"/>
<path d="M7.500 16L2 22" stroke="#1c1c1c" stroke-width="3.400" stroke-linecap="square"/>
<ellipse cx="15" cy="9.800" rx="8.800" ry="6.300" fill="#f4f4f4" stroke="#a2a2a2" stroke-width="1.500"/>
<text x="15" y="12.700" text-anchor="middle" font-family="Liberation Sans, sans-serif" font-weight="bold" font-size="8.200" fill="#222" letter-spacing="-.3">SQL</text>
</g>
<!-- table disabled -->
<g transform="translate(326 28)">
<rect x="0" y="0" width="26" height="26" rx="1.500" fill="#e2e2e2"/>
<g stroke="#f4f4f4" stroke-width="2.300"><path d="M3 4h3M8 4h8M18 4h5.500M3 7.700h3M8 7.700h8M18 7.700h5.500M3 11.400h3M8 11.400h8M18 11.400h5.500M3 15.100h3M8 15.100h8M18 15.100h5.500M3 18.800h3M8 18.800h8M18 18.800h5.500M3 22.500h3M8 22.500h8M18 22.500h5.500"/></g>
</g>
<g transform="translate(364.500 28)">
<rect x="0" y="0" width="26" height="26" rx="1.500" fill="#e2e2e2"/>
<g stroke="#f4f4f4" stroke-width="2.300"><path d="M3 4h3M8 4h8M18 4h5.500M3 7.700h3M8 7.700h8M18 7.700h5.500M3 11.400h3M8 11.400h8M18 11.400h5.500M3 15.100h3M8 15.100h4M3 18.800h3M8 18.800h5M3 22.500h3M8 22.500h8"/></g>
<path d="M12 15h15l-5.500 6.500v5h-4v-5z" fill="#d2d2d2" stroke="#e9e9e9" stroke-width=".8"/>
</g>
<!-- wrench -->
<g transform="translate(404.500 30)">
<path d="M14.800 .8c-3.800 1-5.800 4.300-4.800 8L1.300 17.600c-1.400 1.500-1.200 3.400 0 4.500 1.200 1.100 3.100 1 4.400-.4l8.500-9c3.900 1 7.600-1.200 8.600-5.300l-1.300-.8-3.600 2.900-3.200-.9-.9-3.200 3-3.500z" fill="#ededed" stroke="#5c5c5c" stroke-width="1.400" stroke-linejoin="round"/>
<circle cx="3.900" cy="19.600" r="1.100" fill="#fff" stroke="#777" stroke-width=".7"/>
</g>
<!-- puzzle -->
<g transform="translate(442 28.500)" stroke-linejoin="round">
<path d="M.8 4.500h4.200c.6 0 .7-.4.400-1-.9-1.800 .2-3 1.600-3s2.500 1.200 1.600 3c-.3 .6-.2 1 .4 1h4v4.200c0 .6 .4 .7 1 .4 1.800-.9 3 .2 3 1.600s-1.200 2.500-3 1.600c-.6-.3-1-.2-1 .4v5.800H9c-.6 0-.7 .4-.4 1 .9 1.800-.2 3-1.600 3s-2.500-1.200-1.600-3c.3-.6 .2-1-.4-1H.8z" fill="#dcc68a" stroke="#a8873a" stroke-width="1"/>
<path d="M13.800 5.300h3.700c.6 0 .7-.4 .4-1-.9-1.800 .2-3 1.600-3s2.500 1.200 1.600 3c-.3 .6-.2 1 .4 1h4.700v4.300c0 .6-.4 .7-1 .4-1.800-.9-3 .2-3 1.600s1.200 2.500 3 1.600c.6-.3 1-.2 1 .4v5.900h-4.700c-.6 0-.7 .4-.4 1 .9 1.800-.2 3-1.600 3s-2.500-1.200-1.600-3c.3-.6 .2-1-.4-1h-3.700v-5.900c0-.6-.4-.7-1-.4-1.800 .9-3-.2-3-1.600s1.200-2.500 3-1.600c.6 .3 1 .2 1-.4z" fill="#5fcf7a" stroke="#249a3c" stroke-width="1"/>
</g>
<path d="M479.300 39.500h6.200l-3.100 3.500z" fill="#111"/>
<rect x="494.500" y="30" width="1" height="22" fill="#d9d7d3"/>
<!-- guru disabled -->
<g transform="translate(508 28)" fill="#e1e1e1" stroke="#d3d3d3" stroke-width=".8">
<path d="M12 .8C8 .8 5 2 3.500 4 1.500 4.500 .6 6.500 .8 9c.2 2.500 1.200 4.500 2.700 5.500 .5 2 1.500 3.500 3 4.500 1 3 3 7 5.500 7s4.500-4 5.500-7c1.500-1 2.500-2.500 3-4.500 1.500-1 2.500-3 2.700-5.500 .2-2.500-.7-4.500-2.700-5C19 2 16 .8 12 .8z"/>
<circle cx="8.300" cy="10" r="2.900" fill="#ededed"/><circle cx="15.700" cy="10" r="2.900" fill="#ededed"/>
<circle cx="8.300" cy="10" r="1" fill="#d0d0d0" stroke="none"/><circle cx="15.700" cy="10" r="1" fill="#d0d0d0" stroke="none"/>
<path d="M6.500 16c2-1.500 4-1.800 5.500-.8 1.500-1 3.500-.7 5.500 .8-1.500 1-3.500 1.200-5.500 .4-2 .8-4 .6-5.500-.4z" fill="#ececec"/>
<path d="M9.500 19c.8 2 1.600 5 2.500 5s1.700-3 2.500-5c-1.700-.8-3.300-.8-5 0z" fill="#f0f0f0"/>
</g>
<!-- help -->
<text x="559" y="53.600" text-anchor="middle" font-family="Liberation Sans, sans-serif" font-weight="bold" font-size="35" fill="#d3ee5a" stroke="#b4d63a" stroke-width="1.200">?</text>

</svg>

<!--/TB-->
<div id="tbgray" class="a"></div>
<div class="a" style="left:0;top:21px;width:1200px;height:6px;background:linear-gradient(rgba(0,0,0,.5),rgba(0,0,0,.2) 35%,rgba(0,0,0,.06) 70%,rgba(0,0,0,0));z-index:3"></div>
<div class="a" style="left:311px;top:62px;width:889px;height:591px;background:#dcdcdc"></div>
<div id="rtabs" class="a"></div>
<div id="rgap" class="a"></div>
<svg class="a" style="left:1187px;top:74px" width="7" height="7" viewBox="0 0 7 7"><rect x="0" y="0" width="7" height="2" fill="#6e6e6e"/><path d="M0 3h7L3.5 6.6z" fill="#000"/></svg>
<div id="rlist" class="a"><div id="rlhead" class="a"></div></div>
<div id="sqlhead" class="a"></div>
<svg class="a" style="left:1186px;top:455px" width="10" height="10" viewBox="0 0 10 10"><rect x=".5" y=".5" width="9" height="9" rx="1.5" fill="#e8e8e8" stroke="#111"/><path d="M2.6 2.6l4.8 4.8M7.4 2.6L2.6 7.4" stroke="#000" stroke-width="1.8"/></svg>
<div id="sql" class="a"><div id="sqlm" class="a"></div>
  <span class="code" style="left:77px;top:152.300px">LC_CTYPE = <span style="color:#7f007f">'en_US.UTF-8'</span></span>
  <span class="code" style="left:77px;top:168.300px">CONNECTION LIMIT = -<span style="color:#007f7f">1</span>;</span>
  <div class="a" style="left:880px;top:0;width:3px;height:140px;background:#f07746"></div>
</div>
<div class="a" style="left:316px;top:650px;width:434px;height:2px;background:#f07746"></div>
<div id="status" class="a">
  <div class="sf" style="left:1px;width:1051px"></div>
  <div class="sf" style="left:1056px;width:84px"></div>
  <span class="t" style="left:4px;top:4px"><span style="letter-spacing:0.25px">Restoring previous environment... Done.</span></span>
  <svg class="a" style="left:1130px;top:10px" width="11" height="11" viewBox="0 0 11 11"><g fill="#c9c6c0"><rect x="9" y="0" width="1.200" height="1.200"/><rect x="6" y="3" width="1.200" height="1.200"/><rect x="9" y="3" width="1.200" height="1.200"/><rect x="3" y="6" width="1.200" height="1.200"/><rect x="6" y="6" width="1.200" height="1.200"/><rect x="9" y="6" width="1.200" height="1.200"/><rect x="0" y="9" width="1.200" height="1.200"/><rect x="3" y="9" width="1.200" height="1.200"/><rect x="6" y="9" width="1.200" height="1.200"/><rect x="9" y="9" width="1.200" height="1.200"/></g></svg>
  <span class="t" style="left:1060px;top:4px"><span style="letter-spacing:-0.35px">1.07 secs</span></span>
</div>
<div id="obhead" class="a"><span class="t" style="left:3px;top:0;font-size:10.6px;line-height:14px;color:#fff"><span style="letter-spacing:0.05px">Object browser</span></span></div>
<div id="tree" class="a" style="overflow:hidden">
<!--TREE-->
<i class="exp" style="left:9px;top:8px"></i>
<svg class="a" style="left:29px;top:4px" width="12" height="15" viewBox="0 0 12 15"><path d="M1.5 2.2l1.3-1.4h6.4l1.3 1.4v11.3h-9z" fill="#f3eef4" stroke="#8f6a93"/><path d="M2 5.5h8M2 9.2h8" stroke="#8f6a93" stroke-width=".9"/><rect x="6.8" y="3" width="2.2" height="1.6" fill="#39b8d0"/><rect x="6.8" y="6.6" width="2.2" height="1.6" fill="#39b8d0"/><rect x="6.8" y="10.4" width="2.2" height="1.6" fill="#39b8d0"/></svg>
<span class="row" style="left:46px;top:2px"><span style="letter-spacing:0.09px">Server Groups</span></span>
<i class="exp" style="left:22px;top:28px"></i>
<svg class="a" style="left:43px;top:25px" width="12" height="15" viewBox="0 0 12 15"><path d="M1.5 2.2l1.3-1.4h6.4l1.3 1.4v11.3h-9z" fill="#f3eef4" stroke="#8f6a93"/><path d="M2 5.5h8M2 9.2h8" stroke="#8f6a93" stroke-width=".9"/><rect x="6.8" y="3" width="2.2" height="1.6" fill="#39b8d0"/><rect x="6.8" y="6.6" width="2.2" height="1.6" fill="#39b8d0"/><rect x="6.8" y="10.4" width="2.2" height="1.6" fill="#39b8d0"/></svg>
<span class="row" style="left:59px;top:23px"><span style="letter-spacing:-0.03px">Servers (1)</span></span>
<i class="exp" style="left:35px;top:48px"></i>
<svg class="a" style="left:56px;top:45px" width="12" height="15" viewBox="0 0 12 15"><path d="M1.5 2.2l1.3-1.4h6.4l1.3 1.4v11.3h-9z" fill="#e9e4ea" stroke="#8f6a93"/><path d="M3.5 3v9" stroke="#c9bccb" stroke-width="1.6"/><path d="M6 3v7" stroke="#d8cfd9" stroke-width="1.2"/><rect x="6.8" y="10.6" width="2.4" height="1.8" fill="#39b8d0"/></svg>
<span class="row" style="left:72px;top:43px"><span style="letter-spacing:-0.02px">Test (local:.s.PGSQL.5432</span>)</span>
<i class="exp" style="left:48px;top:69px"></i>
<svg class="a" style="left:69px;top:65px" width="14" height="15" viewBox="0 0 14 15"><path d="M1 3.2v8.6c0 1.5 2.7 2.4 6 2.4s6-.9 6-2.4V3.200c0-1.500-2.700-2.400-6-2.400s-6 .9-6 2.400z" fill="#f3ecc0" stroke="#b5a04a"/><path d="M1 3.400c0 1.400 2.700 2.300 6 2.300s6-.9 6-2.300M1 7.300c0 1.400 2.700 2.300 6 2.300s6-.9 6-2.300" fill="none" stroke="#b5a04a"/></svg>
<span class="row" style="left:86px;top:63px"><span style="letter-spacing:0.07px">Databases (7)</span></span>
<svg class="a" style="left:82px;top:85px" width="15" height="16" viewBox="0 0 15 16"><path d="M.8 3.700v8.200c0 1.400 2.500 2.300 5.700 2.300s5.700-.9 5.700-2.300V3.700c0-1.400-2.500-2.300-5.700-2.300S.8 2.300.8 3.700z" fill="#f6f2d4" stroke="#c2b062" stroke-width=".9"/><path d="M.8 3.900c0 1.300 2.500 2.200 5.700 2.200s5.700-.9 5.700-2.200" fill="none" stroke="#cfc07a" stroke-width=".9"/><path d="M4.600 5.600l8.600 8.600M13.200 5.600l-8.600 8.600" stroke="#e3201f" stroke-width="3.100"/></svg>
<span class="row" style="left:99px;top:83px"><span style="letter-spacing:0.50px">adempiere</span></span>
<svg class="a" style="left:82px;top:106px" width="15" height="16" viewBox="0 0 15 16"><path d="M.8 3.700v8.200c0 1.400 2.500 2.300 5.700 2.300s5.700-.9 5.700-2.300V3.700c0-1.400-2.500-2.300-5.700-2.300S.8 2.300.8 3.700z" fill="#f6f2d4" stroke="#c2b062" stroke-width=".9"/><path d="M.8 3.900c0 1.300 2.500 2.200 5.700 2.200s5.700-.9 5.700-2.200" fill="none" stroke="#cfc07a" stroke-width=".9"/><path d="M4.600 5.600l8.600 8.600M13.200 5.600l-8.600 8.600" stroke="#e3201f" stroke-width="3.100"/></svg>
<span class="row" style="left:99px;top:104px"><span style="letter-spacing:0.52px">idempiere</span></span>
<svg class="a" style="left:82px;top:126px" width="15" height="16" viewBox="0 0 15 16"><path d="M.8 3.700v8.200c0 1.400 2.500 2.300 5.700 2.300s5.700-.9 5.700-2.300V3.700c0-1.400-2.500-2.300-5.700-2.300S.8 2.300.8 3.700z" fill="#f6f2d4" stroke="#c2b062" stroke-width=".9"/><path d="M.8 3.900c0 1.300 2.500 2.200 5.700 2.200s5.700-.9 5.700-2.200" fill="none" stroke="#cfc07a" stroke-width=".9"/><path d="M4.600 5.600l8.600 8.600M13.200 5.600l-8.600 8.600" stroke="#e3201f" stroke-width="3.100"/></svg>
<span class="row" style="left:99px;top:124px"><span style="letter-spacing:0.19px">l</span></span>
<i class="exp" style="left:62px;top:149px"></i>
<svg class="a" style="left:82px;top:146px" width="15" height="16" viewBox="0 0 15 16"><path d="M.8 3.700v8.200c0 1.400 2.500 2.300 5.700 2.300s5.700-.9 5.700-2.300V3.700c0-1.400-2.500-2.300-5.700-2.300S.8 2.300.8 3.700z" fill="#f6f2d4" stroke="#c2b062" stroke-width=".9"/><path d="M.8 3.900c0 1.300 2.500 2.200 5.700 2.200s5.700-.9 5.700-2.200" fill="none" stroke="#cfc07a" stroke-width=".9"/></svg>
<div class="a" style="left:96px;top:143px;width:25px;height:20px;background:#e4e2e0;border:1px solid #d6d4d1;border-radius:2px"></div>
<span class="row" style="left:99px;top:144px"><span style="letter-spacing:0.40px">leo</span></span>
<i class="exp p" style="left:75px;top:170px"></i>
<svg class="a" style="left:94px;top:166px" width="15" height="15" viewBox="0 0 15 15"><g fill="none" stroke="#7f4fd0" stroke-width="2.200"><path d="M5 1.500l3.500 3.500L5 8.500 1.500 5z"/><path d="M10 4.500l3.500 3.500L10 11.500 6.500 8z"/><path d="M5.500 7.500L9 11l-3.500 3L2.500 11z"/></g><rect x="6" y="6.500" width="3" height="3" fill="#f4e23a" transform="rotate(45 7.500 8)"/></svg>
<span class="row" style="left:112px;top:164px"><span style="letter-spacing:0.12px">Catalogs (2)</span></span>
<i class="exp p" style="left:75px;top:190px"></i>
<svg class="a" style="left:94px;top:186px" width="15" height="15" viewBox="0 0 15 15"><g fill="none" stroke="#2f9a3c" stroke-width="1.800"><path d="M4 1.500l3 3-3 3-3-3z"/><path d="M7.500 3.500l3 3-3 3-3-3z"/><path d="M11 5.500l3 3-3 3-3-3z"/><path d="M7.500 8l3 3-3 3-3-3z"/></g></svg>
<span class="row" style="left:112px;top:184px"><span style="letter-spacing:0.11px">Extensions (1)</span></span>
<i class="exp p" style="left:75px;top:210px"></i>
<svg class="a" style="left:94px;top:206px" width="15" height="15" viewBox="0 0 15 15"><g fill="none" stroke="#d9504f" stroke-width="2.200"><path d="M5 1.500l3.500 3.500L5 8.500 1.500 5z"/><path d="M10 4.500l3.500 3.500L10 11.500 6.500 8z"/><path d="M5.500 7.500L9 11l-3.500 3L2.500 11z"/></g></svg>
<span class="row" style="left:112px;top:204px"><span style="letter-spacing:-0.13px">Schemas (1)</span></span>
<svg class="a" style="left:94px;top:227px" width="15" height="15" viewBox="0 0 15 15"><rect x="1" y="1" width="8" height="8" rx="1.500" fill="#f3ecc0" stroke="#b5a04a"/><rect x="6" y="6" width="8" height="8" rx="1.500" fill="#9cc9ea" stroke="#3f83b8"/><path d="M3 3l6 6M9 5v4.500H4.500" fill="none" stroke="#2f78b4" stroke-width="2"/></svg>
<span class="row" style="left:112px;top:225px"><span style="letter-spacing:0.22px">Slony Replication</span> (0)</span>
<svg class="a" style="left:82px;top:247px" width="15" height="16" viewBox="0 0 15 16"><path d="M.8 3.700v8.200c0 1.400 2.500 2.300 5.700 2.300s5.700-.9 5.700-2.300V3.700c0-1.400-2.500-2.300-5.700-2.300S.8 2.300.8 3.700z" fill="#f6f2d4" stroke="#c2b062" stroke-width=".9"/><path d="M.8 3.900c0 1.300 2.500 2.200 5.700 2.200s5.700-.9 5.700-2.200" fill="none" stroke="#cfc07a" stroke-width=".9"/><path d="M4.600 5.600l8.600 8.600M13.200 5.600l-8.600 8.600" stroke="#e3201f" stroke-width="3.100"/></svg>
<span class="row" style="left:99px;top:245px"><span style="letter-spacing:0.48px">openbravopostgres</span></span>
<svg class="a" style="left:82px;top:267px" width="15" height="16" viewBox="0 0 15 16"><path d="M.8 3.700v8.200c0 1.400 2.500 2.300 5.700 2.300s5.700-.9 5.700-2.300V3.700c0-1.400-2.500-2.300-5.700-2.300S.8 2.300.8 3.700z" fill="#f6f2d4" stroke="#c2b062" stroke-width=".9"/><path d="M.8 3.900c0 1.300 2.500 2.200 5.700 2.200s5.700-.9 5.700-2.200" fill="none" stroke="#cfc07a" stroke-width=".9"/><path d="M4.600 5.600l8.600 8.600M13.200 5.600l-8.600 8.600" stroke="#e3201f" stroke-width="3.100"/></svg>
<span class="row" style="left:99px;top:265px"><span style="letter-spacing:0.48px">openbravopostgres</span>ql</span>
<svg class="a" style="left:82px;top:287px" width="15" height="16" viewBox="0 0 15 16"><path d="M.8 3.700v8.200c0 1.400 2.500 2.300 5.700 2.300s5.700-.9 5.700-2.300V3.700c0-1.400-2.500-2.300-5.700-2.300S.8 2.300.8 3.700z" fill="#f6f2d4" stroke="#c2b062" stroke-width=".9"/><path d="M.8 3.900c0 1.300 2.500 2.200 5.700 2.200s5.700-.9 5.700-2.200" fill="none" stroke="#cfc07a" stroke-width=".9"/></svg>
<span class="row" style="left:99px;top:285px"><span style="letter-spacing:0.46px">postgres</span></span>
<i class="exp p" style="left:48px;top:311px"></i>
<svg class="a" style="left:69px;top:308px" width="15" height="15" viewBox="0 0 15 15"><path d="M1 3h3.500l1 1H9v5H1z" fill="#f6e27a" stroke="#c2a32c"/><path d="M5.500 7H9l1 1h4v5.500H5.500z" fill="#f9ea95" stroke="#c2a32c"/></svg>
<span class="row" style="left:86px;top:306px"><span style="letter-spacing:0.07px">Tablespaces (2)</span></span>
<svg class="a" style="left:69px;top:328px" width="15" height="15" viewBox="0 0 15 15"><circle cx="5" cy="3.500" r="2.300" fill="#f1e6d6" stroke="#8a7f75" stroke-width=".8"/><path d="M1 12c0-4 1.500-6 4-6s4 2 4 6z" fill="#e9e9ee" stroke="#8a8a98" stroke-width=".8"/><circle cx="10" cy="5" r="2" fill="#f1e6d6" stroke="#8a7f75" stroke-width=".8"/><rect x="6.500" y="8" width="7" height="6" fill="#4f8fd6" stroke="#2b5f9e" stroke-width=".8"/><path d="M8 11l1.500 1.500L12 9.500" stroke="#d33" fill="none" stroke-width="1.200"/></svg>
<span class="row" style="left:86px;top:326px"><span style="letter-spacing:0.03px">Group Roles (0)</span></span>
<i class="exp p" style="left:48px;top:351px"></i>
<svg class="a" style="left:69px;top:348px" width="15" height="15" viewBox="0 0 15 15"><circle cx="6" cy="3.800" r="2.800" fill="#f1e6d6" stroke="#8a7f75" stroke-width=".8"/><path d="M1 13.500c0-5 2-7 5-7s5 2 5 7z" fill="#ececf0" stroke="#8a8a98" stroke-width=".8"/><circle cx="11" cy="11.500" r="2" fill="none" stroke="#d8b21e" stroke-width="1.600"/><path d="M9.500 10L6 8.500" stroke="#d8b21e" stroke-width="1.600"/></svg>
<span class="row" style="left:86px;top:346px"><span style="letter-spacing:0.04px">Login Roles (4)</span></span>
<!--/TREE-->
</div>
<!-- ===== dialog ===== -->
<div id="dlg" class="a">
  <div id="dtitle" class="a">
    <svg class="a" style="left:8px;top:5px" width="32" height="15" viewBox="0 0 32 15">
      <circle cx="8.500" cy="7.500" r="6.800" fill="#33322e"/>
      <circle cx="8.500" cy="7.500" r="6" fill="#e9582b"/>
      <circle cx="8.500" cy="6.800" r="5.300" fill="#f06a3c"/>
      <path d="M6.200 5.200l4.600 4.600M10.800 5.200l-4.600 4.600" stroke="#5c2310" stroke-width="1.400"/>
      <circle cx="24.500" cy="7.500" r="6.800" fill="#33322e"/>
      <circle cx="24.500" cy="7.500" r="6" fill="#7b7a73"/>
      <circle cx="24.500" cy="6.800" r="5.300" fill="#8a8982"/>
      <rect x="21.700" y="4.700" width="5.600" height="5.600" rx="1" fill="none" stroke="#55544e" stroke-width="1.200"/>
      <path d="M24.500 5v5M22 7.500h5" stroke="#6a6963" stroke-width=".7"/>
    </svg>
    <span class="t" style="left:51px;top:4px;color:#dfdbd2;font-weight:bold"><span style="letter-spacing:0.37px">New Server Registration</span></span>
  </div>
  <div class="tab on" style="left:3px;width:77px"><span class="t" style="left:7px;top:6px"><span style="letter-spacing:0.51px">Properties</span></span></div>
  <div class="tab" style="left:82px;width:34px"><span class="t" style="left:6.500px;top:5px"><span style="letter-spacing:-1.27px">SSL</span></span></div>
  <div class="tab" style="left:117px;width:72px"><span class="t" style="left:7.500px;top:5px"><span style="letter-spacing:0.15px">Advanced</span></span></div>
  <div id="nb" class="a"></div>
  <span class="lbl" style="top:64px"><span style="letter-spacing:0.10px">Name</span></span>
  <div class="inp" style="top:61px;border:1.500px solid #ee8558;border-radius:4px;box-shadow:none"><div class="a" style="left:2.500px;top:2.500px;width:1px;height:15px;background:#222"></div></div>
  <span class="lbl" style="top:96px"><span style="letter-spacing:0.52px">Host</span></span>
  <div class="inp" style="top:92px"></div>
  <span class="lbl" style="top:128px"><span style="letter-spacing:0.97px">Port</span></span>
  <div class="inp" style="top:124px"><span style="letter-spacing:-0.13px">5432</span></div>
  <span class="lbl" style="top:159px"><span style="letter-spacing:0.00px">Service</span></span>
  <div class="inp" style="top:155px"></div>
  <span class="lbl" style="top:192px"><span style="letter-spacing:0.14px">Maintenance DB</span></span>
  <div class="combo" style="top:187px"><span style="letter-spacing:0.42px">postgres</span><i></i></div>
  <span class="lbl" style="top:224px"><span style="letter-spacing:0.18px">Username</span></span>
  <div class="inp" style="top:220px"><span style="letter-spacing:0.33px">leo</span></div>
  <span class="lbl" style="top:256px"><span style="letter-spacing:0.21px">Password</span></span>
  <div class="inp" style="top:252px"></div>
  <span class="lbl" style="top:286px"><span style="letter-spacing:0.32px">Store password</span></span>
  <svg class="a" style="left:118px;top:286px" width="14" height="15" viewBox="0 0 14 15"><rect x=".5" y="1.500" width="12" height="12" rx="2" fill="#ec7a48" stroke="#c45a2c"/><path d="M3 7l2.800 3.300L11.300 3.500" fill="none" stroke="#4a2a1c" stroke-width="1.700"/></svg>
  <span class="lbl" style="top:318px"><span style="letter-spacing:0.32px">Colour</span></span>
  <div class="btn" style="left:116px;top:313px;width:675px;background:linear-gradient(#f8f7f6,#ecebe9 50%,#e2e0dd);border-color:#bcb8b0"><div class="a" style="left:253px;top:3px;width:167px;height:16px;background:#fff;border:1px solid #222"></div></div>
  <span class="lbl" style="top:355px"><span style="letter-spacing:0.20px">Group</span></span>
  <div class="combo" style="top:350px"><span style="letter-spacing:-0.06px">Servers</span><i></i></div>
  <div class="btn" style="left:4px;top:519px;width:73px"><span style="letter-spacing:0.10px">Help</span></div>
  <div class="btn" style="left:643px;top:519px;width:73px;color:#a8a6a2;background:linear-gradient(#f1f0ee,#e6e4e1);border-color:#c8c4be"><span style="letter-spacing:-0.75px">OK</span></div>
  <div class="btn" style="left:723px;top:519px;width:73px"><span style="letter-spacing:-0.13px">Cancel</span></div>
  <div class="a" style="left:2px;top:548px;width:796px;height:17px;border:1px solid #c9c6c0;border-right-color:#fafafa;border-bottom-color:#fafafa"></div>
<svg class="a" style="left:787px;top:553px" width="11" height="11" viewBox="0 0 11 11"><g fill="#c9c6c0"><rect x="9" y="0" width="1.200" height="1.200"/><rect x="6" y="3" width="1.200" height="1.200"/><rect x="9" y="3" width="1.200" height="1.200"/><rect x="3" y="6" width="1.200" height="1.200"/><rect x="6" y="6" width="1.200" height="1.200"/><rect x="9" y="6" width="1.200" height="1.200"/><rect x="0" y="9" width="1.200" height="1.200"/><rect x="3" y="9" width="1.200" height="1.200"/><rect x="6" y="9" width="1.200" height="1.200"/><rect x="9" y="9" width="1.200" height="1.200"/></g></svg>
</div>
<svg id="cursor" class="a" style="left:535px;top:63px;z-index:9" width="14" height="19" viewBox="0 0 14 19"><path d="M1.700 1.300v13.200l3.100-2.900 2.300 5.200 2.300-1-2.300-5h4.300z" fill="#fff" stroke="#111" stroke-width="1.100" stroke-linejoin="round"/></svg>
</body>
</html>
